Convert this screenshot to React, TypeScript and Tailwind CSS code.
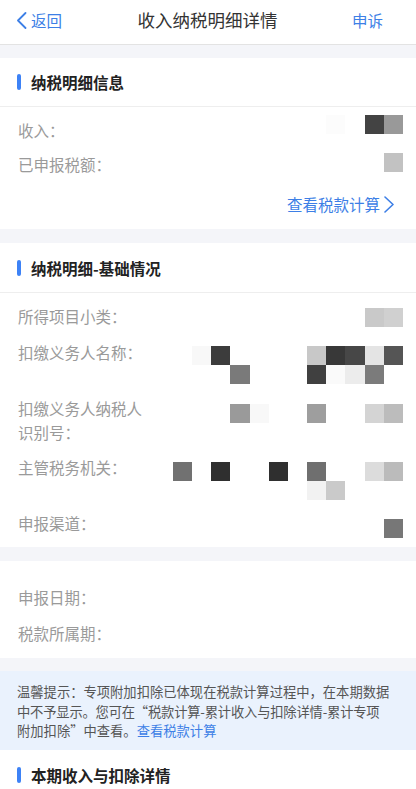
import React from "react";

type Cell = { [k: number]: string };

const FONT = { fontFamily: '"Noto Sans CJK SC", "Noto Sans", sans-serif' };

function Mosaic({ rows }: { rows: Cell[] }) {
  return (
    <div className="flex flex-col">
      {rows.map((r, i) => (
        <div key={i} className="flex">
          {Array.from({ length: 12 }).map((_, j) => {
            const idx = 11 - j;
            const c = r[idx];
            return (
              <div
                key={j}
                className="w-[19.2px] h-[19.2px]"
                style={{ backgroundColor: c ?? "transparent" }}
              />
            );
          })}
        </div>
      ))}
    </div>
  );
}

function SectionTitle({ text, h = "h-[48px]" }: { text: string; h?: string }) {
  return (
    <div className={`flex items-center ${h} border-b border-[#eeeeee] pl-[17px]`}>
      <div className="w-[4px] h-[16px] rounded-full bg-[#3d82f6]" />
      <div className="ml-[10px] text-[15.5px] font-bold text-[#222222] leading-[24px]">{text}</div>
    </div>
  );
}

function Row({
  label,
  h,
  labelMt = 0,
  mosaicMt = 0,
  rows,
}: {
  label: React.ReactNode;
  h: string;
  labelMt?: number;
  mosaicMt?: number;
  rows?: Cell[];
}) {
  return (
    <div className={`flex items-start justify-between pl-[18px] pr-[13px] ${h}`}>
      <div
        className="w-[128px] text-[15.5px] leading-[24px] text-[#9a9a9a]"
        style={{ marginTop: labelMt }}
      >
        {label}
      </div>
      {rows && (
        <div style={{ marginTop: mosaicMt }}>
          <Mosaic rows={rows} />
        </div>
      )}
    </div>
  );
}

export default function App() {
  return (
    <div className="w-[416px] h-[789px] overflow-hidden bg-[#f4f5f9]" style={FONT}>
      {/* Header */}
      <div className="h-[45px] bg-white border-b border-[#e3e3e3] grid grid-cols-[1fr_auto_1fr] items-center pb-[4px] pl-[16px] pr-[33px]">
        <div className="flex items-center text-[#3d7fe6]">
          <svg width="11" height="17" viewBox="0 0 11 17" fill="none">
            <path d="M9.5 1 L2 8.5 L9.5 16" stroke="#3d7fe6" strokeWidth="1.8" strokeLinejoin="round" strokeLinecap="round" />
          </svg>
          <span className="ml-[4px] text-[15.5px] leading-[24px]">返回</span>
        </div>
        <div className="text-[17.5px] leading-[24px] text-[#333333] translate-x-[8px]">收入纳税明细详情</div>
        <div className="text-[15.5px] leading-[24px] text-[#3d7fe6] text-right">申诉</div>
      </div>

      {/* Section 1 */}
      <div className="mt-[13px] bg-white">
        <SectionTitle text="纳税明细信息" h="h-[49px]" />
        <div className="pt-[8px]">
          <Row
            label="收入："
            h="h-[37px]"
            labelMt={3}
            rows={[{ 3: "#fcfcfc", 1: "#434343", 0: "#999999" }]}
          />
          <Row label="已申报税额：" h="h-[40px]" mosaicMt={1} rows={[{ 0: "#c2c2c2" }]} />
          <div className="h-[37px] flex items-start justify-end pr-[21px]">
            <span className="text-[15.5px] leading-[24px] text-[#3d7fe6]">查看税款计算</span>
            <svg className="ml-[3px] mt-[4px]" width="12" height="17" viewBox="0 0 12 17" fill="none">
              <path d="M2 1 L10 8.5 L2 16" stroke="#3d7fe6" strokeWidth="1.6" strokeLinejoin="round" strokeLinecap="round" />
            </svg>
          </div>
        </div>
      </div>

      {/* Section 2 */}
      <div className="mt-[14px] bg-white">
        <SectionTitle text="纳税明细-基础情况" h="h-[50px]" />
        <div className="pt-[11px]">
          <Row label="所得项目小类：" h="h-[36px]" mosaicMt={4} rows={[{ 1: "#c9c9c9", 0: "#d0d0d0" }]} />
          <Row
            label="扣缴义务人名称："
            h="h-[56px]"
            mosaicMt={6}
            rows={[
              { 10: "#f8f8f8", 9: "#3c3c3c", 4: "#c8c8c8", 3: "#383838", 2: "#474747", 1: "#e4e4e4", 0: "#555555" },
              { 8: "#7a7a7a", 4: "#404040", 3: "#fafafa", 2: "#ececec", 1: "#7b7b7b" },
            ]}
          />
          <Row
            label="扣缴义务人纳税人识别号："
            h="h-[59px]"
            mosaicMt={8}
            rows={[{ 8: "#9a9a9a", 7: "#f8f8f8", 4: "#9e9e9e", 1: "#d4d4d4", 0: "#bcbcbc" }]}
          />
          <Row
            label="主管税务机关："
            h="h-[56px]"
            mosaicMt={7}
            rows={[
              { 11: "#717171", 9: "#2f2f2f", 6: "#2f2f2f", 4: "#6f6f6f", 1: "#dcdcdc", 0: "#bbbbbb" },
              { 4: "#f2f2f2", 3: "#cacaca" },
            ]}
          />
          <Row label="申报渠道：" h="h-[36px]" mosaicMt={8} rows={[{ 0: "#777777" }]} />
        </div>
      </div>

      {/* Section 3 */}
      <div className="mt-[14px] bg-white pt-[24px] pb-[1px]">
        <Row label="申报日期：" h="h-[36px]" />
        <Row label="税款所属期：" h="h-[36px]" />
      </div>

      {/* Tip */}
      <div className="mt-[13px] h-[79px] bg-[#eaf2fd] px-[17px] pt-[11px] text-[13.3px] leading-[19.7px] text-[#555555]">
        <div>温馨提示：专项附加扣除已体现在税款计算过程中，在本期数据</div>
        <div className="whitespace-nowrap tracking-[-0.2px]">中不予显示。您可在“税款计算-累计收入与扣除详情-累计专项</div>
        <div>
          附加扣除”中查看。<span className="text-[#3d7fe6]">查看税款计算</span>
        </div>
      </div>

      {/* Section 4 */}
      <div className="bg-white">
        <SectionTitle text="本期收入与扣除详情" h="h-[50px]" />
      </div>
    </div>
  );
}
